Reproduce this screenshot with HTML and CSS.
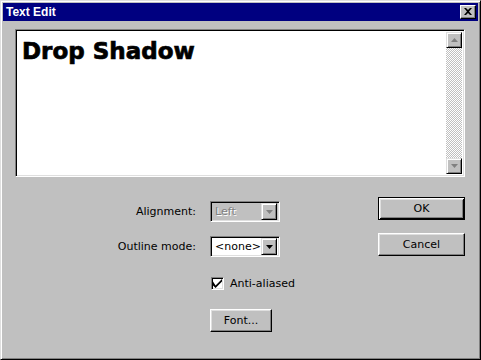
FILE: index.html
```html
<!DOCTYPE html>
<html>
<head>
<meta charset="utf-8">
<link rel="stylesheet" href="styles.css">
</head>
<body>
<div class="window">
  <div class="titlebar">
    <span class="title">Text Edit</span>
    <span class="close">
      <svg width="8" height="7" viewBox="0 0 8 7"><path d="M0 0h2l2 2 2-2h2L5 3.5 8 7H6L4 5 2 7H0l3-3.5z" fill="#000"/></svg>
    </span>
  </div>
  <div class="body">
    <div class="editor">
      <div class="edit-text">Drop Shadow</div>
      <div class="scrollbar">
        <div class="sb-btn"><svg width="7" height="4" viewBox="0 0 7 4"><path d="M3.5 0L7 4H0z" fill="#808080"/></svg></div>
        <div class="sb-track"></div>
        <div class="sb-btn"><svg width="7" height="4" viewBox="0 0 7 4"><path d="M0 0h7L3.5 4z" fill="#808080"/></svg></div>
      </div>
    </div>
    <div class="lower">
      <div class="form">
        <label class="lbl r1">Alignment:</label>
        <div class="combo disabled r1">
          <span class="combo-val">Left</span>
          <span class="combo-btn"><svg width="7" height="4" viewBox="0 0 7 4"><path d="M0 0h7L3.5 4z" fill="#808080"/></svg></span>
        </div>
        <label class="lbl r2">Outline mode:</label>
        <div class="combo r2">
          <span class="combo-val">&lt;none&gt;</span>
          <span class="combo-btn"><svg width="7" height="4" viewBox="0 0 7 4"><path d="M0 0h7L3.5 4z" fill="#000"/></svg></span>
        </div>
        <div class="check r3">
          <span class="box"><svg width="9" height="9" viewBox="0 0 7 7"><path d="M0 2v3l2 2 5-5V0L2 5z" fill="#000"/></svg></span>
          <span>Anti-aliased</span>
        </div>
        <div class="r4"><button class="btn font-btn">Font...</button></div>
      </div>
      <div class="buttons">
        <button class="btn default">OK</button>
        <button class="btn">Cancel</button>
      </div>
    </div>
  </div>
</div>
</body>
</html>
```

FILE: styles.css
```css
html, body {
  margin: 0;
  padding: 0;
  background: #c0c0c0;
}
body {
  font-family: "Liberation Sans", Arial, sans-serif;
  font-size: 12px;
  color: #000;
}
.window {
  width: 481px;
  height: 360px;
  box-sizing: border-box;
  background: #c0c0c0;
  border: 1px solid;
  border-color: #dfdfdf #000 #000 #dfdfdf;
  box-shadow: inset 1px 1px 0 #fff, inset -1px -1px 0 #808080;
  padding: 2px;
  display: flex;
  flex-direction: column;
}
.titlebar {
  height: 18px;
  background: #000080;
  display: flex;
  align-items: center;
  justify-content: space-between;
  padding: 0 2px 0 3px;
}
.title {
  color: #fff;
  font-weight: bold;
  font-size: 12px;
  font-family: "Liberation Sans", Arial, sans-serif;
}
.close {
  width: 16px;
  height: 14px;
  box-sizing: border-box;
  background: #c0c0c0;
  border: 1px solid;
  border-color: #fff #000 #000 #fff;
  box-shadow: inset -1px -1px 0 #808080;
  display: flex;
  align-items: center;
  justify-content: center;
  padding: 0 1px 1px 0;
}
.body {
  padding: 8px 13px 0 12px;
  display: flex;
  flex-direction: column;
}
.editor {
  height: 148px;
  box-sizing: border-box;
  border: 1px solid;
  border-color: #808080 #fff #fff #808080;
  box-shadow: inset 1px 1px 0 #000, inset -1px -1px 0 #dfdfdf;
  background: #fff;
  padding: 2px;
  display: flex;
}
.edit-text {
  flex: 1;
  font-family: "DejaVu Sans", Verdana, sans-serif;
  font-weight: bold;
  font-size: 23px;
  line-height: 26px;
  padding: 6px 0 0 4px;
  -webkit-text-stroke: 0.7px #000;
}
.scrollbar {
  width: 16px;
  display: flex;
  flex-direction: column;
}
.sb-btn {
  height: 16px;
  box-sizing: border-box;
  background: #c0c0c0;
  border: 1px solid;
  border-color: #dfdfdf #000 #000 #dfdfdf;
  box-shadow: inset 1px 1px 0 #fff, inset -1px -1px 0 #808080;
  display: flex;
  align-items: center;
  justify-content: center;
}
.sb-track {
  flex: 1;
  background: repeating-conic-gradient(#c0c0c0 0 25%, #fff 0 50%) 0 0 / 2px 2px;
}
.lower {
  display: flex;
  padding-top: 20px;
}
.form {
  display: grid;
  grid-template-columns: 181px 70px;
  column-gap: 14px;
  align-items: center;
  width: 363px;
  align-content: start;
}
.lbl {
  text-align: right;
  font-family: "DejaVu Sans", Verdana, sans-serif;
  font-size: 11px;
}
.r1 { grid-row: 1; margin-top: 4px; }
.r2 { grid-row: 2; margin-top: 14px; }
.r3 { grid-row: 3; grid-column: 2 / span 2; margin-top: 20px; }
.r4 { grid-row: 4; grid-column: 2; margin-top: 19px; }
.combo {
  height: 21px;
  box-sizing: border-box;
  border: 1px solid;
  border-color: #808080 #fff #fff #808080;
  box-shadow: inset 1px 1px 0 #000, inset -1px -1px 0 #dfdfdf;
  background: #fff;
  padding: 2px;
  display: flex;
  align-items: center;
  font-family: "DejaVu Sans", Verdana, sans-serif;
  font-size: 11px;
}
.combo.disabled {
  background: #c0c0c0;
  color: #808080;
}
.combo-val {
  flex: 1;
  padding-left: 2px;
}
.disabled .combo-val {
  text-shadow: 1px 1px 0 #fff;
}
.combo-btn {
  width: 16px;
  height: 17px;
  box-sizing: border-box;
  background: #c0c0c0;
  border: 1px solid;
  border-color: #dfdfdf #000 #000 #dfdfdf;
  box-shadow: inset 1px 1px 0 #fff, inset -1px -1px 0 #808080;
  display: flex;
  align-items: center;
  justify-content: center;
}
.check {
  display: flex;
  align-items: center;
  gap: 6px;
  font-family: "DejaVu Sans", Verdana, sans-serif;
  font-size: 11px;
  padding-left: 1px;
}
.box {
  width: 13px;
  height: 13px;
  box-sizing: border-box;
  background: #fff;
  border: 1px solid;
  border-color: #808080 #fff #fff #808080;
  box-shadow: inset 1px 1px 0 #000, inset -1px -1px 0 #dfdfdf;
  display: flex;
  align-items: center;
  justify-content: center;
}
.btn {
  font-family: "DejaVu Sans", Verdana, sans-serif;
  font-size: 11px;
  color: #000;
  background: #c0c0c0;
  border: 1px solid;
  border-color: #fff #000 #000 #fff;
  box-shadow: inset -1px -1px 0 #808080, inset 1px 1px 0 #dfdfdf;
  height: 23px;
  padding: 0;
  margin: 0;
  box-sizing: border-box;
}
.font-btn {
  width: 62px;
}
.buttons {
  display: flex;
  flex-direction: column;
  gap: 13px;
  padding-left: 0;
}
.buttons .btn {
  width: 87px;
}
.btn.default {
  border: 1px solid #000;
  box-shadow: inset 1px 1px 0 #fff, inset -1px -1px 0 #000, inset 2px 2px 0 #dfdfdf, inset -2px -2px 0 #808080;
}
```
